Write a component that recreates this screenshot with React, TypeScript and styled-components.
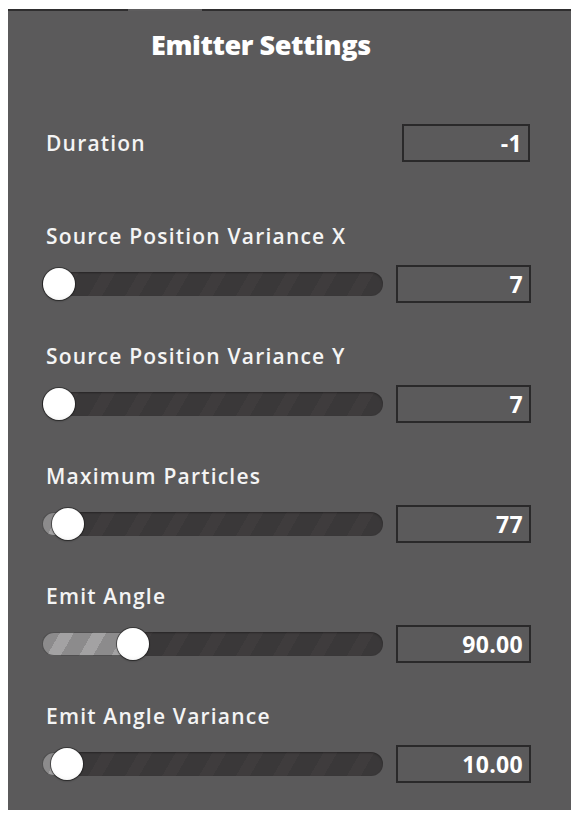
import React from "react";
import styled, { createGlobalStyle } from "styled-components";

const Global = createGlobalStyle`
  html, body { margin: 0; padding: 0; background: #ffffff; }
  body { font-family: "Open Sans", "Liberation Sans", sans-serif; }
`;

const Page = styled.div`
  padding: 9px 8px 8px 8px;
`;

const Panel = styled.div`
  position: relative;
  width: 563px;
  height: 801px;
  box-sizing: border-box;
  background: #5b5a5b;
  border-top: 2px solid #2f2e2f;
  display: flex;
  flex-direction: column;
  &::before {
    content: "";
    position: absolute;
    top: -2px;
    left: 120px;
    width: 74px;
    height: 2px;
    background: #5e5d5e;
  }
`;

const Title = styled.h1`
  margin: 0;
  height: 66px;
  display: flex;
  align-items: center;
  padding-left: 143px;
  color: #ffffff;
  font-size: 27px;
  font-weight: 800;
  letter-spacing: -0.4px;
`;

const Label = styled.div`
  color: #f4f4f4;
  font-size: 21px;
  font-weight: 600;
  letter-spacing: 1.2px;
`;

const DurationRow = styled.div`
  display: flex;
  align-items: center;
  justify-content: space-between;
  padding: 0 41px 0 38px;
  margin-top: 48px;
  height: 36px;
`;

const Section = styled.div`
  display: flex;
  flex-direction: column;
  padding: 0 40px 0 34px;
  margin-top: 60px;
  & + & {
    margin-top: 38px;
  }
`;

const SectionLabel = styled(Label)`
  padding-left: 4px;
  height: 30px;
  display: flex;
  align-items: center;
`;

const Controls = styled.div`
  display: flex;
  align-items: center;
  justify-content: space-between;
  margin-top: 14px;
`;

const Track = styled.div`
  position: relative;
  width: 341px;
  height: 24px;
  border-radius: 12px;
  background: repeating-linear-gradient(
      120deg,
      #3a3839 0px,
      #3a3839 20px,
      #3f3c3d 20px,
      #3f3c3d 32px
    );
  box-shadow: inset 0 1px 2px rgba(0, 0, 0, 0.35);
`;

const Fill = styled.div`
  position: absolute;
  left: 0;
  top: 0;
  bottom: 0;
  border-radius: 12px 0 0 12px;
  background: repeating-linear-gradient(
      120deg,
      #8c8b8c 0px,
      #8c8b8c 16px,
      #a3a2a3 16px,
      #a3a2a3 28px
    );
  box-shadow: inset 0 0 0 1px rgba(40, 40, 40, 0.6);
`;

const Thumb = styled.div`
  position: absolute;
  top: 50%;
  width: 32px;
  height: 32px;
  margin-left: -16px;
  margin-top: -16px;
  border-radius: 50%;
  background: radial-gradient(circle at 50% 40%, #ffffff 60%, #ececec 100%);
  box-shadow: 0 0 0 1px rgba(30, 30, 30, 0.55), 0 1px 2px rgba(0, 0, 0, 0.4);
`;

const ValueBox = styled.div<{ $w?: number }>`
  box-sizing: border-box;
  width: ${(p) => p.$w ?? 135}px;
  height: 38px;
  border: 2px solid #2a292a;
  display: flex;
  align-items: center;
  justify-content: flex-end;
  padding-right: 6px;
  color: #ffffff;
  font-size: 23px;
  font-weight: 700;
  letter-spacing: 0.3px;
`;

type SliderProps = { pos: number };

const Slider: React.FC<SliderProps> = ({ pos }) => (
  <Track>
    {pos > 20 && <Fill style={{ width: pos }} />}
    <Thumb style={{ left: pos }} />
  </Track>
);

const rows = [
  { label: "Source Position Variance X", value: "7", pos: 17 },
  { label: "Source Position Variance Y", value: "7", pos: 17 },
  { label: "Maximum Particles", value: "77", pos: 26 },
  { label: "Emit Angle", value: "90.00", pos: 91 },
  { label: "Emit Angle Variance", value: "10.00", pos: 25 },
];

export default function App() {
  return (
    <>
      <Global />
      <Page>
        <Panel>
          <Title>Emitter Settings</Title>
          <DurationRow>
            <Label>Duration</Label>
            <ValueBox $w={128}>-1</ValueBox>
          </DurationRow>
          {rows.map((r) => (
            <Section key={r.label}>
              <SectionLabel>{r.label}</SectionLabel>
              <Controls>
                <Slider pos={r.pos} />
                <ValueBox>{r.value}</ValueBox>
              </Controls>
            </Section>
          ))}
        </Panel>
      </Page>
    </>
  );
}
